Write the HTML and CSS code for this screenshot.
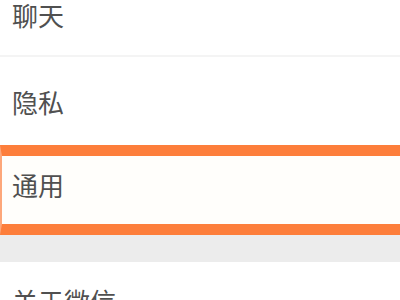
FILE: index.html
```html
<!DOCTYPE html>
<html lang="zh-CN">
<head>
    <meta charset="UTF-8">
    <meta name="viewport" content="width=device-width, initial-scale=1.0">
    <title>设置</title>
    <link rel="stylesheet" href="styles.css">
</head>
<body>

    <div class="group">
        <div class="item first">聊天</div>
        <div class="item">隐私</div>
        <div class="item active">通用</div>
    </div>

    <div class="gap"></div>

    <div class="group">
        <div class="item last">关于微信</div>
    </div>

</body>
</html>
```

FILE: styles.css
```css
* {
    margin: 0;
    padding: 0;
    box-sizing: border-box;
    font-family: "Noto Sans CJK SC", "Noto Sans", sans-serif;
}

body {
    background-color: #fff;
    width: 400px;
    height: 300px;
    overflow: hidden;
}

.group {
    background-color: #fff;
}

.item {
    display: flex;
    align-items: center;
    height: 88px;
    padding-left: 12px;
    font-size: 26px;
    color: #505050;
}

.item.first {
    height: 57px;
    align-items: flex-start;
    line-height: 30px;
    border-bottom: 2px solid #f4f4f4;
}

.item.active {
    height: 90px;
    background-color: #fffefb;
    border-top: 11px solid #fd7e3b;
    border-bottom: 11px solid #fd7e3b;
    border-left: 2px solid #fda77a;
    padding-left: 10px;
    padding-bottom: 12px;
}

.gap {
    height: 27px;
    background-color: #ececec;
}

.item.last {
    align-items: flex-start;
    padding-top: 24px;
    line-height: 30px;
}
```
